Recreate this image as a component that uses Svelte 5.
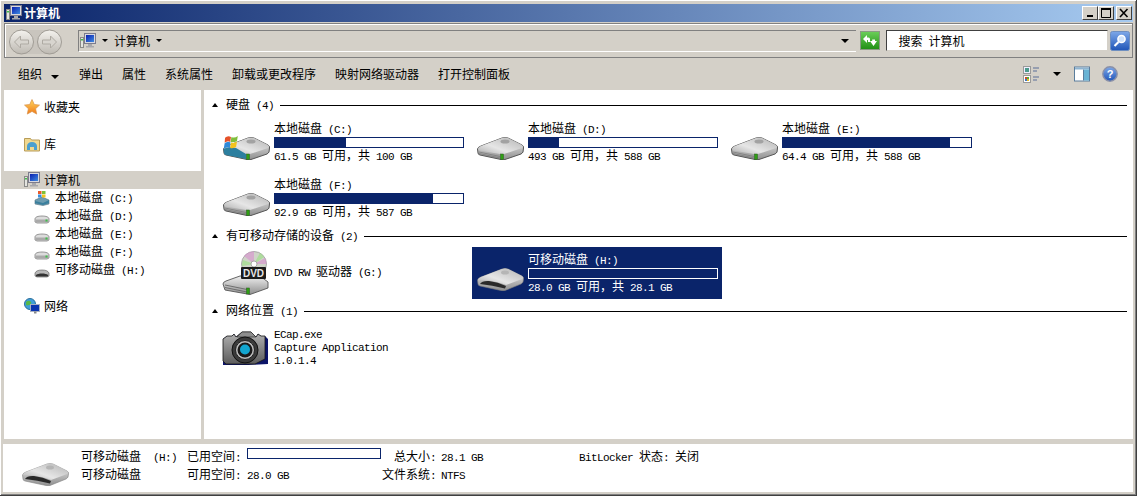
<script>
    // SimSun-like mix: CJK at 12px, latin in a 6px wide mono
    const runs = (t) => t.split(/([\u3000-\u9fff\uff00-\uffef]+)/).filter(Boolean);
    const isCjk = (s) => /[\u3000-\u9fff\uff00-\uffef]/.test(s);

    const commands = ['弹出', '属性', '系统属性', '卸载或更改程序', '映射网络驱动器', '打开控制面板'];

    const navDrives = [
        { name: '本地磁盘 (C:)', icon: 'win' },
        { name: '本地磁盘 (D:)', icon: 'hdd' },
        { name: '本地磁盘 (E:)', icon: 'hdd' },
        { name: '本地磁盘 (F:)', icon: 'hdd' },
        { name: '可移动磁盘 (H:)', icon: 'usb' },
    ];

    const disks = [
        { name: '本地磁盘 (C:)', used: 38, info: '61.5 GB 可用，共 100 GB', icon: 'win' },
        { name: '本地磁盘 (D:)', used: 16, info: '493 GB 可用，共 588 GB', icon: 'hdd' },
        { name: '本地磁盘 (E:)', used: 89, info: '64.4 GB 可用，共 588 GB', icon: 'hdd' },
        { name: '本地磁盘 (F:)', used: 84, info: '92.9 GB 可用，共 587 GB', icon: 'hdd' },
    ];
</script>

{#snippet txt(t)}<span class="txt">{#each runs(t) as r}<span class={isCjk(r) ? 'cjk' : 'lat'}>{r}</span>{/each}</span>{/snippet}

{#snippet pc()}
    <svg class="ico16" viewBox="0 0 16 16">
        <rect x="0.500" y="4.500" width="3" height="10" fill="#e4e4e0" stroke="#8a8a88" />
        <rect x="1" y="6" width="2" height="1.500" fill="#3fc04a" />
        <rect x="4.500" y="0.500" width="11" height="10" fill="#d8d8e0" stroke="#7c7c8c" />
        <rect x="6" y="2" width="8" height="7" fill="url(#scr)" />
        <path d="M8 11h4v2h2v1.500H6V13h2z" fill="#a8a8ac" />
    </svg>
{/snippet}

{#snippet smallDrive(kind)}
    <svg class="ico16" viewBox="0 0 16 16">
        {#if kind === 'win'}
            <path d="M1 10l7-3 7 3v4l-6 1.500-8-1.500z" fill="#6d9cb0" stroke="#50707f" stroke-width=".6" />
            <path d="M1 11l8 2 6-3v3l-6 2-8-2z" fill="#3a7f9d" />
            <rect x="4" y="1" width="3.500" height="3" fill="#ea5a2a" />
            <rect x="8" y="1" width="3.500" height="3" fill="#7cc03a" />
            <rect x="4" y="4.500" width="3.500" height="3" fill="#3b8fdc" />
            <rect x="8" y="4.500" width="3.500" height="3" fill="#f3c41e" />
        {:else if kind === 'usb'}
            <path d="M1 11c1-2 3-3 7-3s6 1 7 3v3l-2 1H3l-2-1z" fill="#b8b8b8" stroke="#555" stroke-width=".6" />
            <path d="M2 13c2-2 10-2 12 0v1.500H2z" fill="#333" />
        {:else}
            <path d="M1 11c0-2 3-3 7-3s7 1 7 3v3l-2 1H3l-2-1z" fill="#dcdcdc" stroke="#707070" stroke-width=".7" />
            <path d="M1.500 11.500h13v2.300l-1.500.7H3l-1.500-.7z" fill="#a9a9a9" />
            <rect x="11.500" y="11.500" width="2" height="2" fill="#3fc04a" />
        {/if}
    </svg>
{/snippet}

{#snippet bigDrive(kind)}
    <svg class="ico48" viewBox="0 0 48 36">
        {#if kind !== 'usb'}
            <path d="M1.500 25Q2 23 5 22L26 14Q29 13 32 14L46 21Q48 22 47.500 24L47 28Q46.500 29 45 30L29 35.500Q27 36 25 35.500L4 31Q2 30.500 2 29Z" fill="url(#hdface)" stroke="#555" stroke-width="1" />
            <path d="M2 25Q2.500 23 5 22L26 14Q29 13 32 14L46 21Q48 23 46 24L28 30Q26 31 24 30L3 26.500Z" fill="url(#hdtop)" />
            <ellipse cx="29" cy="17.500" rx="4.500" ry="2" fill="#a2a2a2" />
            <path d="M3 28l21 4.500M3 29.500l21 4.500" stroke="#7c7c7c" stroke-width=".8" />
            <rect x="24.500" y="30" width="3" height="5.500" fill="#2f9f14" stroke="#2a5a20" stroke-width=".5" />
        {:else}
            <path d="M1.500 25Q2 23 5 22L26 14Q29 13 32 14L46 21Q48 22 47.500 24L47 27Q46.500 28 45 29L29 35.500Q27 36 25 35.500L4 31Q2 30.500 2 29Z" fill="url(#hdface)" stroke="#808080" stroke-width=".6" />
            <path d="M2 25Q2.500 23 5 22L26 14Q29 13 32 14L46 21Q48 23 46 24L30 30Q20 26 12 25.500Z" fill="url(#hdtop)" />
            <ellipse cx="29" cy="17.500" rx="4" ry="2" fill="#b5b5b5" />
            <path d="M4 29Q6 25.500 13 26Q22 27 30 31L29 33.500Q16 30 4 29Z" fill="#2a2a2a" />
        {/if}
        {#if kind === 'win'}
            <path d="M1.500 25Q6 22 14 24L24 30 24 35 4 31Q2 30.500 2 29Z" fill="#2c7f9f" />
            <g transform="translate(.5 9.500) scale(.85)">
                <path d="M3 5Q6 2 10 4L9 10Q6 8 2.500 11Z" fill="#e5522a" />
                <path d="M10.500 4Q14 6 18 3L17 9Q13 11 9.500 10Z" fill="#7fbe3b" />
                <path d="M2.500 11.500Q6 8.500 9.500 10.500L8.500 17Q5 15 1.500 18Z" fill="#2f89d8" />
                <path d="M10 10.500Q13 12 17 9.500L16 16Q12.500 18 9 17Z" fill="#f4c31d" />
            </g>
        {/if}
    </svg>
{/snippet}

<svg class="defs" aria-hidden="true">
    <defs>
        <linearGradient id="scr" x1="0" y1="0" x2="1" y2="1"><stop offset="0" stop-color="#0a1fb0" /><stop offset="1" stop-color="#3f8be0" /></linearGradient>
        <linearGradient id="hdface" x1="0" y1="0" x2="0" y2="1"><stop offset="0" stop-color="#efefef" /><stop offset="1" stop-color="#8f8f8f" /></linearGradient>
        <linearGradient id="hdtop" x1="1" y1="0" x2="0" y2="1"><stop offset="0" stop-color="#b4b4b4" /><stop offset=".6" stop-color="#e6e6e6" /><stop offset="1" stop-color="#adadad" /></linearGradient>
        <linearGradient id="nav" x1="0" y1="0" x2="0" y2="1"><stop offset="0" stop-color="#f4f2ee" /><stop offset="1" stop-color="#bdb9b2" /></linearGradient>
        <linearGradient id="green" x1="0" y1="0" x2="0" y2="1"><stop offset="0" stop-color="#6ccf5a" /><stop offset="1" stop-color="#1f8f14" /></linearGradient>
        <linearGradient id="blue" x1="0" y1="0" x2="0" y2="1"><stop offset="0" stop-color="#7ea8e8" /><stop offset="1" stop-color="#1f55b8" /></linearGradient>
        <linearGradient id="star" x1="0" y1="0" x2="0" y2="1"><stop offset="0" stop-color="#ffd75e" /><stop offset="1" stop-color="#f07a1a" /></linearGradient>
        <linearGradient id="cam" x1="0" y1="0" x2="0" y2="1"><stop offset="0" stop-color="#b4b4b4" /><stop offset="1" stop-color="#5c5c5c" /></linearGradient>
    </defs>
</svg>

<div class="win">
    <header class="title">
        {@render pc()}
        <strong class="cjk">计算机</strong>
        <div class="caps">
            <button class="cap" aria-label="最小化"><svg viewBox="0 0 14 12"><rect x="4" y="8" width="6" height="2" fill="#000" /></svg></button>
            <button class="cap" aria-label="最大化"><svg viewBox="0 0 14 12"><path d="M2.500 1.500h9v9h-9z" fill="none" stroke="#000" /><rect x="2" y="1" width="10" height="2" fill="#000" /></svg></button>
            <button class="cap close" aria-label="关闭"><svg viewBox="0 0 14 12"><path d="M3 2l7.500 8M10.500 2L3 10" stroke="#000" stroke-width="1.600" /></svg></button>
        </div>
    </header>

    <div class="navbar">
        <svg class="navbtns" viewBox="0 0 56 28">
            <rect x="12" y="2" width="29" height="24" fill="#c9c5be" />
            <circle cx="12.500" cy="14" r="12" fill="url(#nav)" stroke="#a09c95" />
            <circle cx="40.500" cy="14" r="12" fill="url(#nav)" stroke="#a09c95" />
            <path d="M5.500 14l6-6v4h8v4h-8v4z" fill="#d8d5cf" stroke="#aeaaa3" />
            <path d="M47.500 14l-6-6v4h-8v4h8v4z" fill="#d8d5cf" stroke="#aeaaa3" />
        </svg>
        <div class="address">
            {@render pc()}
            <i class="tri small"></i>
            <span class="crumb">{@render txt('计算机')}</span>
            <i class="tri small"></i>
            <i class="tri end"></i>
        </div>
        <svg class="refresh" viewBox="0 0 20 19">
            <rect x=".5" y=".5" width="19" height="18" fill="url(#green)" stroke="#8a9a84" />
            <path d="M3 8l4-4v2.500h1.500Q10 6.500 10 8v3H8V9H7v3zM17 10l-3.500 5-3.500-5h2.200V8.500H15V10z" fill="#fff" />
        </svg>
        <div class="search">{@render txt('搜索 计算机')}</div>
        <svg class="searchbtn" viewBox="0 0 20 20">
            <rect x=".5" y=".5" width="19" height="19" rx="2" fill="url(#blue)" stroke="#6f8fc0" />
            <circle cx="11.500" cy="8" r="3.600" fill="#cfe2fb" stroke="#fff" stroke-width="1.500" />
            <path d="M8.500 11l-4 4" stroke="#fff" stroke-width="2.200" />
        </svg>
    </div>

    <div class="cmdbar">
        <span class="cmd org">{@render txt('组织')}<i class="tri"></i></span>
        {#each commands as c}
            <span class="cmd">{@render txt(c)}</span>
        {/each}
        <div class="cmdright">
            <svg class="ico18" viewBox="0 0 18 17">
                <rect x=".5" y=".5" width="7" height="7" fill="#eef" stroke="#999" />
                <rect x="2" y="2" width="4" height="4" fill="#4d9a8c" />
                <rect x=".5" y="9.500" width="7" height="7" fill="#fff" stroke="#999" />
                <rect x="2" y="11" width="2" height="2" fill="#d04a2c" /><rect x="4" y="11" width="2" height="2" fill="#58a83a" />
                <rect x="2" y="13" width="2" height="2" fill="#3a74c8" /><rect x="4" y="13" width="2" height="2" fill="#e8b81e" />
                <path d="M10 2h6M10 5h4M10 11h6M10 14h4" stroke="#5a6f98" stroke-width="1.200" />
            </svg>
            <i class="tri"></i>
            <svg class="ico16" viewBox="0 0 16 15">
                <rect x=".5" y=".5" width="15" height="14" fill="#fff" stroke="#5a7d9c" />
                <rect x="1" y="1" width="14" height="2" fill="#8fb4d0" />
                <rect x="10" y="3" width="5" height="11" fill="#69b3d4" />
                <path d="M9.500 3v11" stroke="#5a7d9c" />
            </svg>
            <svg class="ico16" viewBox="0 0 16 16">
                <circle cx="8" cy="8" r="7.200" fill="url(#blue)" stroke="#8a90a8" stroke-width="1.400" />
                <text x="8" y="12" text-anchor="middle" font-size="11" font-weight="700" font-family="Liberation Sans" fill="#fff">?</text>
            </svg>
        </div>
    </div>

    <div class="main">
        <nav class="tree">
            <div class="row">
                <svg class="ico16" viewBox="0 0 16 16"><path d="M8 .5l2.300 5 5.200.6-3.900 3.600 1.100 5.400L8 12.400l-4.700 2.700 1.100-5.400L.5 6.100l5.200-.6z" fill="url(#star)" stroke="#d8924a" stroke-width=".7" /></svg>
                {@render txt('收藏夹')}
            </div>
            <div class="row gap lib">
                <svg class="ico16" viewBox="0 0 16 16">
                    <path d="M.5 2.500h6l1 1.500h8v11H.5z" fill="#f0d890" stroke="#b89c58" />
                    <path d="M3 14v-4c0-2 2-4 5-4s5 2 5 4v4h-3v-3H6v3z" fill="#4a9fd0" />
                </svg>
                {@render txt('库')}
            </div>
            <div class="row gap active">
                {@render pc()}
                {@render txt('计算机')}
            </div>
            {#each navDrives as d}
                <div class="row sub">
                    {@render smallDrive(d.icon)}
                    {@render txt(d.name)}
                </div>
            {/each}
            <div class="row gap">
                <svg class="ico16" viewBox="0 0 16 16">
                    <circle cx="6" cy="6" r="5.500" fill="#3f9fd8" stroke="#2c6f9c" />
                    <path d="M2 4c2-2 4-1 5 0s-1 3-2 3-2 1-3 0z" fill="#57b848" />
                    <rect x="6.500" y="6.500" width="9" height="7" fill="#0b35b0" stroke="#a8b0c0" />
                    <path d="M10 13.500v2h2.500v-2" fill="#888" />
                </svg>
                {@render txt('网络')}
            </div>
        </nav>

        <section class="content">
            <div class="group"><i class="up"></i><span>{@render txt('硬盘 (4)')}</span><hr /></div>
            <div class="tiles">
                {#each disks as d}
                    <div class="tile">
                        {@render bigDrive(d.icon)}
                        <div class="meta stack">
                            <div>{@render txt(d.name)}</div>
                            <div class="bar"><div class="fill" style="width: {d.used}%"></div></div>
                            <div>{@render txt(d.info)}</div>
                        </div>
                    </div>
                {/each}
            </div>

            <div class="group"><i class="up"></i><span>{@render txt('有可移动存储的设备 (2)')}</span><hr /></div>
            <div class="tiles">
                <div class="tile">
                    <svg class="ico48 tall" viewBox="0 0 48 44">
                        <circle cx="32" cy="13" r="12.500" fill="#cfd4c8" stroke="#9a9a9a" stroke-width=".8" />
                        <path d="M32 13L22 5a12.500 12.500 0 0 1 10-4.500zM32 13l11-6a12.500 12.500 0 0 1 1.500 6z" fill="#d98fd0" opacity=".6" />
                        <path d="M32 13l-12 2a12.500 12.500 0 0 1 1-6zM32 13l10-7a12.500 12.500 0 0 0-4-4z" fill="#9fe08a" opacity=".7" />
                        <circle cx="32" cy="13" r="3" fill="#fff" stroke="#999" stroke-width=".8" />
                        <path d="M1 33Q1 31 4 30L18 25H38L46 31V37L28 43.500 3 39Z" fill="url(#hdface)" stroke="#555" stroke-width=".9" />
                        <path d="M3 34l22 4.500M3 36.500l22 4.500" stroke="#666" stroke-width=".9" fill="none" />
                        <rect x="24.500" y="37" width="3" height="6" fill="#2f9f14" stroke="#2a5a20" stroke-width=".5" />
                        <rect x="19" y="16" width="25" height="12" rx="1" fill="#1b1b1b" />
                        <text x="31.500" y="26" text-anchor="middle" font-size="10" font-weight="700" font-family="Liberation Sans" fill="#e8e8e8">DVD</text>
                    </svg>
                    <div class="meta one">{@render txt('DVD RW 驱动器 (G:)')}</div>
                </div>
                <div class="tile selected">
                    {@render bigDrive('usb')}
                    <div class="meta stack">
                        <div>{@render txt('可移动磁盘 (H:)')}</div>
                        <div class="bar"></div>
                        <div>{@render txt('28.0 GB 可用，共 28.1 GB')}</div>
                    </div>
                </div>
            </div>

            <div class="group"><i class="up"></i><span>{@render txt('网络位置 (1)')}</span><hr /></div>
            <div class="tile app">
                <svg class="ico48" viewBox="0 0 48 36">
                    <path d="M1 9L5 6h5l2-2 2 3 6-5h9l5 5 2-3 3 2h4l3 3v25L26 35H1z" fill="#0c1468" />
                    <path d="M1 9L5 6h5l2-2 2 3 6-5h9l5 5 2-3 3 2h4V29L33 34H4L1 31z" fill="url(#cam)" stroke="#151515" stroke-width=".8" />
                    <path d="M20 2h9l5 5H15z" fill="#8e8e8e" stroke="#222" stroke-width=".6" />
                    <circle cx="23" cy="20" r="13" fill="#3a3a3a" stroke="#111" />
                    <circle cx="23" cy="20" r="9.500" fill="#bcbcbc" stroke="#222" />
                    <circle cx="23" cy="20" r="7.500" fill="#1a1a1a" />
                    <circle cx="23" cy="19.500" r="5" fill="#12a6d0" />
                </svg>
                <div class="meta three">
                    <div>{@render txt('ECap.exe')}</div>
                    <div>{@render txt('Capture Application')}</div>
                    <div>{@render txt('1.0.1.4')}</div>
                </div>
            </div>
        </section>
    </div>

    <footer class="details">
        <div class="thumb">{@render bigDrive('usb')}</div>
        <div class="facts">
            <div>{@render txt('可移动磁盘  (H:)')}</div>
            <div>{@render txt('已用空间:')}</div>
            <div class="bar wide"></div>
            <div class="r">{@render txt('总大小:')}</div>
            <div>{@render txt('28.1 GB')}</div>
            <div>{@render txt('BitLocker 状态: 关闭')}</div>
            <div>{@render txt('可移动磁盘')}</div>
            <div>{@render txt('可用空间:')}</div>
            <div>{@render txt('28.0 GB')}</div>
            <div class="r">{@render txt('文件系统:')}</div>
            <div>{@render txt('NTFS')}</div>
            <div></div>
        </div>
    </footer>
</div>

<style>
    :global(body) {
        margin: 0;
        overflow: hidden;
        background: #d4d0c8;
    }
    .defs {
        position: absolute;
        width: 0;
        height: 0;
    }
    .win {
        box-sizing: border-box;
        width: 1137px;
        height: 496px;
        display: flex;
        flex-direction: column;
        padding: 4px 3px 3px 4px;
        background: #d4d0c8;
        border-right: 1px solid #404040;
        border-bottom: 1px solid #404040;
        box-shadow: inset 1px 1px 0 #fff, inset -1px -1px 0 #808080;
        font-family: "Noto Sans CJK SC", "Liberation Sans", sans-serif;
        font-size: 12px;
        line-height: 18px;
        color: #000;
    }
    .cjk {
        font-family: "Noto Sans CJK SC", sans-serif;
        font-size: 12px;
    }
    .lat {
        font-family: "Liberation Mono", monospace;
        font-size: 11px;
        letter-spacing: -0.6px;
        white-space: pre;
    }
    .ico16 {
        width: 16px;
        height: 16px;
        flex: none;
    }
    .ico18 {
        width: 18px;
        height: 17px;
        flex: none;
    }
    .ico48 {
        width: 48px;
        height: 36px;
        flex: none;
    }
    .ico48.tall {
        height: 44px;
    }
    .title {
        height: 18px;
        flex: none;
        display: flex;
        align-items: center;
        gap: 2px;
        padding-left: 2px;
        background: linear-gradient(90deg, #0a246a, #a6caf0);
        color: #fff;
    }
    .title strong {
        font-weight: 700;
    }
    .caps {
        margin-left: auto;
        display: flex;
        margin-right: 1px;
    }
    .cap {
        width: 16px;
        height: 14px;
        padding: 0;
        display: block;
        background: #d4d0c8;
        border: 1px solid;
        border-color: #fff #404040 #404040 #fff;
    }
    .cap.close {
        margin-left: 2px;
    }
    .cap svg {
        display: block;
        width: 14px;
        height: 12px;
    }
    .navbar {
        box-sizing: border-box;
        height: 35px;
        flex: none;
        margin-top: 1px;
        display: flex;
        align-items: center;
        padding: 0 2px 0 4px;
        border: 1px solid #808080;
        box-shadow: inset 1px 1px 0 #fff;
    }
    .navbtns {
        width: 56px;
        height: 28px;
        flex: none;
        margin-top: 2px;
    }
    .address {
        box-sizing: border-box;
        width: 780px;
        height: 22px;
        margin-left: 13px;
        display: flex;
        align-items: center;
        padding-left: 1px;
        border-top: 1px solid #808080;
        border-left: 1px solid #808080;
        border-bottom: 1px solid #fff;
    }
    .crumb {
        margin-left: 6px;
    }
    .tri {
        width: 0;
        height: 0;
        display: inline-block;
        border: 4px solid transparent;
        border-top: 4px solid #000;
        border-bottom: 0;
        margin-left: 9px;
    }
    .tri.small {
        border-width: 3px 3px 0;
        border-top-color: #000;
        margin-left: 6px;
    }
    .tri.end {
        margin-left: auto;
        margin-right: 7px;
    }
    .refresh {
        width: 20px;
        height: 19px;
        flex: none;
        margin-left: 4px;
    }
    .search {
        box-sizing: border-box;
        width: 222px;
        height: 21px;
        margin-left: 6px;
        padding-left: 11px;
        line-height: 19px;
        background: #fff;
        border: 1px solid;
        border-color: #404040 #d4d0c8 #d4d0c8 #404040;
    }
    .searchbtn {
        width: 20px;
        height: 20px;
        margin-left: 2px;
        flex: none;
    }
    .cmdbar {
        height: 32px;
        display: flex;
        align-items: center;
        gap: 19px;
        padding-left: 14px;
        flex: none;
    }
    .cmd.org {
        margin-right: 1px;
    }
    .cmdright {
        margin-left: auto;
        margin-right: 15px;
        display: flex;
        align-items: center;
        gap: 12px;
    }
    .cmdright .tri {
        margin: 0 1px 0 0;
    }
    .main {
        height: 349px;
        display: flex;
        gap: 3px;
        flex: none;
    }
    .tree {
        width: 197px;
        padding-top: 8px;
        background: #fff;
        flex: none;
    }
    .row {
        height: 18px;
        display: flex;
        align-items: center;
        gap: 4px;
        padding-left: 20px;
    }
    .row.gap {
        margin-top: 18px;
    }
    .row.lib {
        margin-top: 19px;
    }
    .row.sub {
        padding-left: 30px;
        gap: 5px;
    }
    .row.active {
        background: #d4d0c8;
    }
    .content {
        flex: 1;
        background: #fff;
        padding: 4px 6px 0 8px;
    }
    .group {
        height: 22px;
        display: flex;
        align-items: center;
    }
    .up {
        width: 0;
        height: 0;
        margin-right: 8px;
        border: 3px solid transparent;
        border-top: 0;
        border-bottom: 4px solid #000;
    }
    .group hr {
        flex: 1;
        height: 1px;
        margin: 0 0 0 6px;
        border: 0;
        background: #000;
    }
    .tiles {
        display: flex;
        flex-wrap: wrap;
        gap: 4px;
        margin: 0 0 1px 6px;
    }
    .tile {
        box-sizing: border-box;
        width: 250px;
        height: 52px;
        display: flex;
        align-items: center;
        gap: 4px;
        padding-left: 4px;
    }
    .tile.selected {
        background: #0a246a;
        color: #fff;
    }
    .tile.app {
        margin-left: 6px;
    }
    .meta {
        width: 190px;
        display: flex;
        flex-direction: column;
    }
    .meta > div {
        height: 15px;
        line-height: 15px;
        white-space: nowrap;
    }
    .meta.stack {
        align-self: flex-start;
        padding-top: 4px;
    }
    .meta.stack > div:last-child {
        margin-top: -2px;
    }
    .meta.one {
        display: block;
        white-space: pre;
        line-height: 18px;
        margin-top: -2px;
    }
    .meta.three {
        margin-top: -5px;
    }
    .meta.three > div {
        height: 13px;
        line-height: 13px;
    }
    .meta .bar {
        margin: 2px 0 1px;
    }
    .bar {
        box-sizing: border-box;
        height: 11px !important;
        border: 1px solid #0a246a;
        background: #fff;
    }
    .fill {
        height: 100%;
        background: #0a246a;
    }
    .selected .bar {
        border-color: #fff;
        background: #0a246a;
    }
    .details {
        height: 48px;
        margin: 5px 0 0 -1px;
        display: flex;
        background: #fff;
        flex: none;
    }
    .thumb {
        width: 78px;
        padding: 6px 0 0 18px;
        box-sizing: border-box;
        flex: none;
    }
    .facts {
        display: grid;
        grid-template-columns: 106px 60px 134px 60px 138px auto;
        grid-auto-rows: 18px;
        padding-top: 3px;
        white-space: pre;
    }
    .facts .wide {
        width: 134px;
        margin-top: 1px;
    }
    .r {
        text-align: right;
        padding-right: 5px;
    }
</style>
